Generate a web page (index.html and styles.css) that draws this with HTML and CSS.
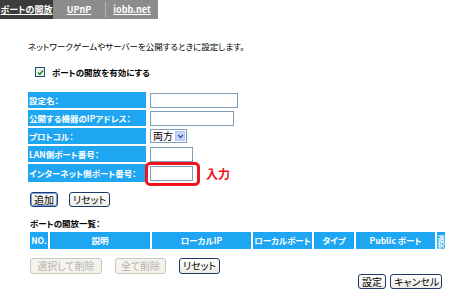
FILE: index.html
```html
<!DOCTYPE html>
<html lang="ja">
<head>
    <meta charset="UTF-8">
    <title>ポートの開放</title>
    <link rel="stylesheet" href="styles.css">
</head>
<body>
    <div class="tabs">
        <a class="tab active">ポートの開放</a>
        <a class="tab">UPnP</a>
        <span class="tab-sep"></span>
        <a class="tab">iobb.net</a>
    </div>

    <div class="page">
        <p class="intro">ネットワークゲームやサーバーを公開するときに設定します。</p>

        <div class="enable">
            <span class="check">
                <svg width="7" height="7" viewBox="0 0 7 7"><path d="M1 3.5 L2.8 5.3 L6 1.5" fill="none" stroke="#2a8a22" stroke-width="1.6"/></svg>
            </span>
            <span>ポートの開放を有効にする</span>
        </div>

        <div class="form">
            <div class="label">設定名：</div>
            <div class="field"><span class="input w88"></span></div>

            <div class="label">公開する機器のIPアドレス：</div>
            <div class="field"><span class="input w84"></span></div>

            <div class="label">プロトコル：</div>
            <div class="field">
                <span class="select">両方<span class="arrow"><svg width="7" height="5" viewBox="0 0 7 5"><path d="M1 1 L3.5 3.5 L6 1" fill="none" stroke="#3a5a8a" stroke-width="1.4"/></svg></span></span>
            </div>

            <div class="label">LAN側ポート番号：</div>
            <div class="field"><span class="input w43"></span></div>

            <div class="label">インターネット側ポート番号：</div>
            <div class="field">
                <span class="mark"><span class="input w43"></span></span>
                <span class="note">入力</span>
            </div>
        </div>

        <div class="actions">
            <button class="btn focus">追加</button>
            <button class="btn">リセット</button>
        </div>

        <h3 class="list-title">ポートの開放一覧：</h3>

        <table class="list">
            <colgroup>
                <col class="c-no"><col class="c-desc"><col class="c-ip"><col class="c-lport"><col class="c-type"><col class="c-pport"><col class="c-sel">
            </colgroup>
            <tr>
                <th>NO.</th>
                <th>説明</th>
                <th>ローカルIP</th>
                <th>ローカルポート</th>
                <th>タイプ</th>
                <th>Public ポート</th>
                <th class="sel"><span>選択</span></th>
            </tr>
        </table>

        <div class="actions list-actions">
            <button class="btn off">選択して削除</button>
            <button class="btn off">全て削除</button>
            <button class="btn">リセット</button>
        </div>

        <div class="footer">
            <button class="btn">設定</button>
            <button class="btn wide">キャンセル</button>
        </div>
    </div>
</body>
</html>
```

FILE: styles.css
```css
body {
    margin: 0;
    font-family: "Noto Sans CJK JP", "Liberation Sans", sans-serif;
    font-size: 8.5px;
    font-feature-settings: "palt";
    color: #000;
    background: #fff;
}

.tabs {
    display: flex;
    align-items: center;
    width: 158px;
    height: 19px;
    background: #8c8c8c;
}

.tab {
    width: 53px;
    color: #fff;
    font-weight: bold;
    font-size: 9px;
    text-align: center;
    text-decoration: underline;
    line-height: 19px;
    white-space: nowrap;
}

.tab.active {
    width: 54px;
    background: #3c3c3c;
}

.tab-sep {
    width: 1px;
    height: 15px;
    background: #b4b4b4;
}

.page {
    padding-left: 28px;
}

.intro {
    margin: 21px 0 0 0;
    line-height: 12px;
}

.enable {
    display: flex;
    align-items: center;
    gap: 7px;
    margin: 14px 0 0 7px;
    height: 12px;
    font-weight: bold;
}

.check {
    display: flex;
    align-items: center;
    justify-content: center;
    width: 8px;
    height: 8px;
    border: 1px solid #1c5180;
    background: #f0f0ea;
}

.form {
    display: grid;
    grid-template-columns: 118px auto;
    column-gap: 4px;
    row-gap: 2px;
    margin-top: 14px;
}

.label {
    background: #1ea6f2;
    color: #fff;
    font-weight: bold;
    height: 16px;
    line-height: 16px;
    padding-left: 1px;
    white-space: nowrap;
}

.label:nth-last-child(2) {
    height: 18px;
    line-height: 18px;
}

.field {
    display: flex;
    align-items: center;
    gap: 8px;
}

.input {
    display: block;
    height: 13px;
    border: 1px solid #7f9db9;
    background: #fff;
}

.w88 { width: 86px; }
.w84 { width: 82px; }
.w43 { width: 41px; }

.select {
    display: flex;
    align-items: center;
    justify-content: space-between;
    width: 33px;
    height: 12px;
    border: 1px solid #7f9db9;
    padding-left: 2px;
    font-size: 10px;
    line-height: 12px;
}

.arrow {
    display: flex;
    align-items: center;
    justify-content: center;
    width: 10px;
    height: 10px;
    margin-right: 1px;
    background: #c3d3fd;
    border: 1px solid #b3c7f0;
    box-sizing: border-box;
}

.mark {
    position: relative;
    display: block;
}

.mark::after {
    content: "";
    position: absolute;
    left: -5px;
    top: -4px;
    right: -7px;
    bottom: -5px;
    border: 3px solid #f0141e;
    border-radius: 5px;
}

.note {
    margin-left: 5px;
    color: #f0141e;
    font-weight: bold;
    font-size: 12px;
}

.actions {
    display: flex;
    gap: 11px;
    margin: 10px 0 0 2px;
}

.btn {
    height: 15px;
    padding: 0 3px;
    font-family: inherit;
    font-size: 10px;
    font-feature-settings: "palt";
    line-height: 11px;
    white-space: nowrap;
    color: #000;
    background: linear-gradient(#ffffff, #ecebe4);
    border: 1px solid #1c3a6a;
    border-radius: 3px;
}

.btn.focus {
    box-shadow: inset 0 0 0 1px #7ca3e8;
}

.btn.off {
    color: #b4b2a6;
    border-color: #c9c7ba;
    background: #f4f3ee;
}

.list-title {
    margin: 10px 0 0 2px;
    font-size: 8.5px;
    line-height: 12px;
}

.list {
    table-layout: fixed;
    width: 419px;
    border-collapse: separate;
    border-spacing: 2px 0;
    margin: 3px 0 0 0;
}

.list th {
    height: 16px;
    padding: 0;
    background: #1ea6f2;
    color: #fff;
    font-size: 8.5px;
    text-align: center;
    line-height: 16px;
    white-space: nowrap;
    overflow: hidden;
}

.list th.sel span {
    display: inline-block;
    writing-mode: vertical-rl;
    font-size: 7px;
    line-height: 8px;
    vertical-align: middle;
}

.c-no { width: 18px; }
.c-desc { width: 100px; }
.c-ip { width: 99px; }
.c-lport { width: 59px; }
.c-type { width: 40px; }
.c-pport { width: 79px; }
.c-sel { width: 8px; }

.list-actions {
    gap: 13px;
    margin-top: 9px;
}

.list-actions .btn {
    height: 16px;
}

.list-actions .btn:first-child {
    width: 72px;
}

.list-actions .btn:nth-child(2) {
    width: 51px;
}

.footer {
    display: flex;
    justify-content: flex-end;
    gap: 4px;
    width: 414px;
}

.btn.wide {
    width: 52px;
}
```
